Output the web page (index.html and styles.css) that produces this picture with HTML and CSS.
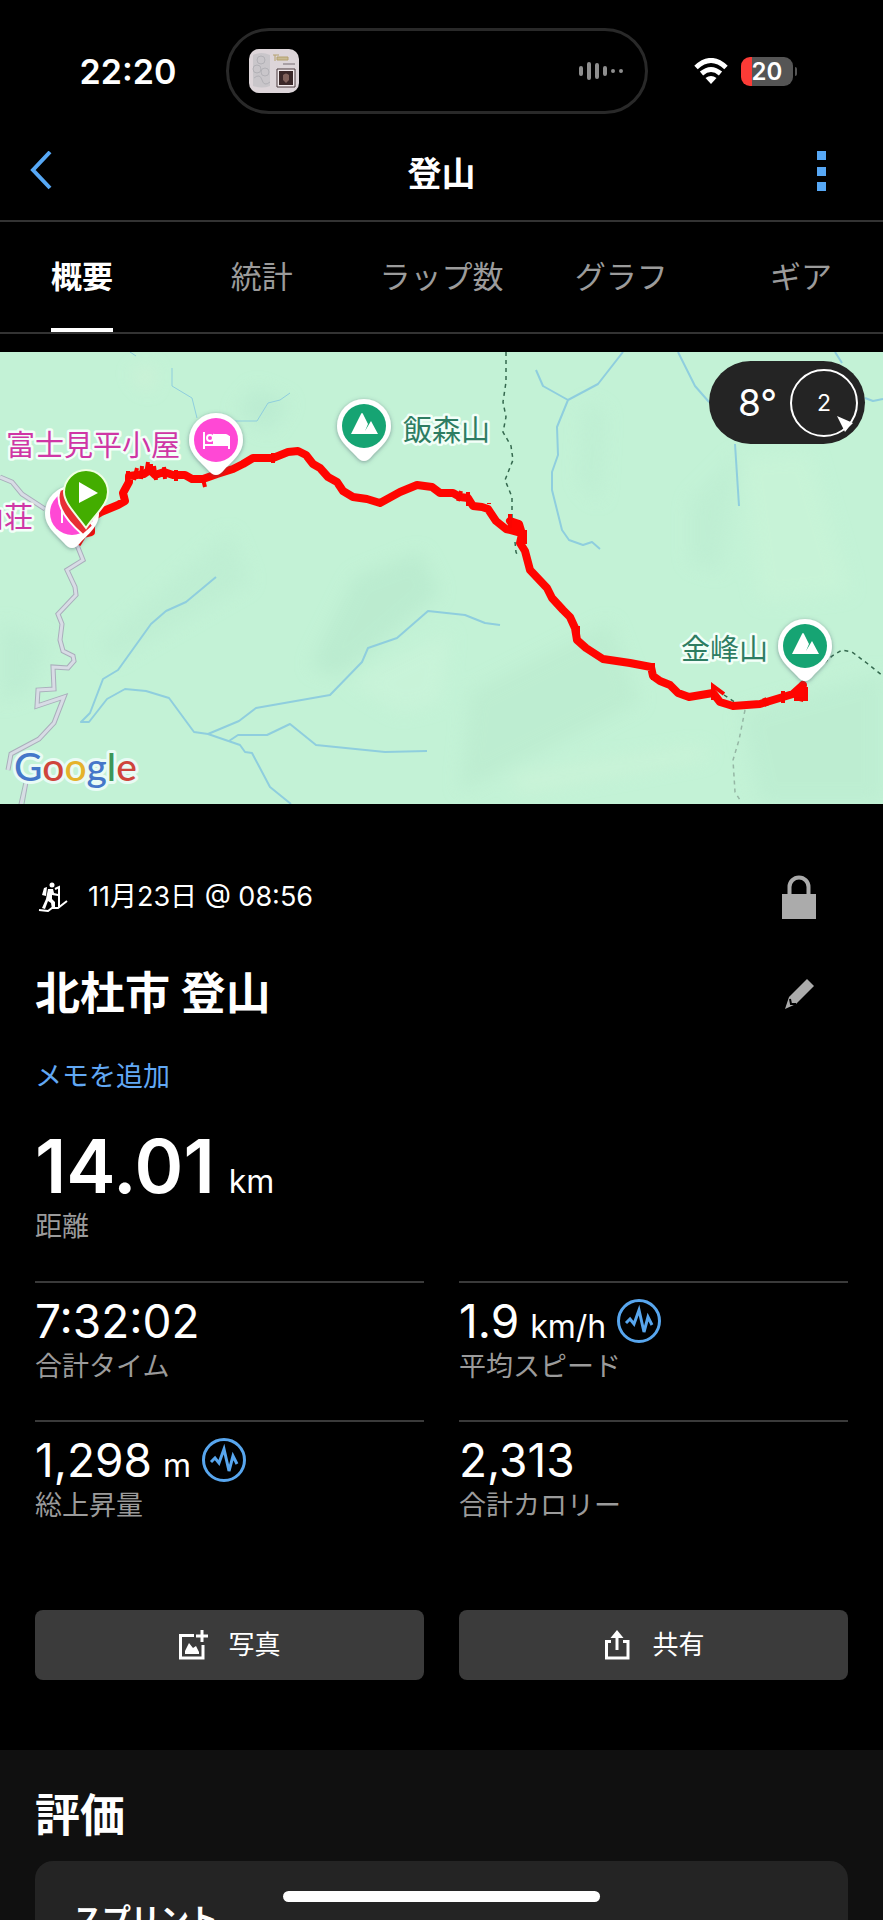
FILE: index.html
```html
<!DOCTYPE html>
<html lang="ja">
<head>
<meta charset="utf-8">
<meta name="viewport" content="width=device-width, initial-scale=1">
<title>登山</title>
<link rel="stylesheet" href="styles.css">
</head>
<body>
<div class="app">
  <div class="status">
    <time class="status-time">22:20</time>
    <div class="island">
      <svg class="artwork" viewBox="0 0 50 44" aria-hidden="true">
        <rect width="50" height="44" rx="10" fill="#ddd5d9"/>
        <path d="M4 6q8-4 17 0v31q-8 3-17 0z" fill="#c9c6ca"/>
        <g fill="none" stroke="#b2b1b6"><circle cx="12" cy="11" r="4"/><circle cx="8" cy="20" r="4"/><circle cx="16" cy="23" r="4"/><path d="M5 29q6-5 8 2t8 2"/></g>
        <path d="M24 6h6M26 6v6M28 8h11v3H28z" stroke="#b4a16e" fill="#c9bb93"/>
        <path d="M34 15h12" stroke="#a9a0a5" stroke-width="2"/>
        <path d="M28 20h18v18H28z" fill="#f1e9eb" stroke="#49383c"/>
        <path d="M30 22h14v14H30z" fill="#3a2728"/>
        <path d="M34 26q3-3 6 0v5l-3 3-3-3z" fill="#80615b"/>
      </svg>
      <svg class="wave" viewBox="0 0 46 18" aria-hidden="true">
        <g stroke="#8e8e8e" stroke-width="4" stroke-linecap="round"><path d="M3 6v6M11 2v14M19 3v12M27 6v6M35 9v0M43 9v0"/></g>
      </svg>
    </div>
    <div class="status-right">
      <svg class="wifi" viewBox="0 0 34 26" aria-hidden="true">
        <g fill="none" stroke="#fff" stroke-width="5"><path d="M2 9.500Q17-4.500 32 9.500"/><path d="M7.500 15.500q9.500-8 19 0"/></g>
        <path d="M11.500 20q5.500-4 11 0L17 26z" fill="#fff"/>
      </svg>
      <div class="battery"><span class="battery-level">20</span></div>
      <span class="battery-nub"></span>
    </div>
  </div>

  <header class="header">
    <button class="icon-button back" aria-label="戻る">
      <svg viewBox="0 0 22 40" width="22" height="40"><path d="M20 1 3 19l17 18" fill="none" stroke="#57a8f5" stroke-width="4"/></svg>
    </button>
    <h1 class="header-title">登山</h1>
    <button class="icon-button more" aria-label="メニュー">
      <svg viewBox="0 0 10 40" width="10" height="40"><path d="M0 0h9v9H0zM0 16h9v9H0zM0 31h9v9H0z" fill="#57a8f5"/></svg>
    </button>
  </header>

  <nav class="tabs">
    <div class="tab-list">
      <a class="tab tab-active" href="#overview">概要</a>
      <a class="tab" href="#stats">統計</a>
      <a class="tab" href="#laps">ラップ数</a>
      <a class="tab" href="#graph">グラフ</a>
      <a class="tab" href="#gear">ギア</a>
    </div>
  </nav>

  <section class="map">
    <svg class="map-canvas" viewBox="0 0 883 452" role="img" aria-label="ルート地図">
      <defs>
        <filter id="soft" x="-30%" y="-30%" width="160%" height="160%"><feGaussianBlur stdDeviation="9"/></filter>
        <filter id="shadow" x="-30%" y="-30%" width="160%" height="160%"><feDropShadow dx="0" dy="1" stdDeviation="2" flood-color="#456" flood-opacity=".55"/></filter>
        <path id="pin" d="M0 35Q-4 35-8 30C-15 22-27 14-27 0A27 27 0 0 1 27 0C27 14 15 22 8 30Q4 35 0 35z"/>
        <g id="peak">
          <use href="#pin" fill="#fff" filter="url(#shadow)"/>
          <circle r="22" fill="#16a473"/>
          <path d="M-13 8-3-12Q-2-14-1-12L4-2 1 5 7-5 14 8z" fill="#fff"/>
        </g>
      </defs>
      <rect width="883" height="452" fill="#c3f2d6"/>
      <g filter="url(#soft)" opacity=".7">
        <path d="M355 225 420 200 440 240 340 325 310 315z" fill="#b8e9cd"/>
        <path d="M255 35 290 50 270 80 235 60z" fill="#b9ead0"/>
        <path d="M470 340 610 270 640 350 460 440z" fill="#bbebcf"/>
        <path d="M740 360 883 320V452H760z" fill="#bbecd0"/>
        <path d="M690 150 740 100 720 220 690 210z" fill="#bdedd2"/>
        <path d="M585 50 605 60 600 150 580 130z" fill="#bdedd2"/>
        <path d="M100 290 230 180 250 230 110 310z" fill="#bdedd2"/>
        <path d="M0 270 50 290 30 340 0 350z" fill="#bbecd1"/>
        <path d="M510 425 700 395 710 405 520 440z" fill="#cff4d9"/>
        <path d="M350 330 450 280 440 350 400 360z" fill="#cbf4da"/>
        <path d="M740 105 810 100 850 240 760 250z" fill="#c9f4d8"/>
        <path d="M130 20 155 15 150 40z" fill="#d4f1d8"/>
      </g>
      <path d="M0 125 12 130 22 142 45 157 M77 193 83 208 67 218 75 235 76 243 58 262 62 272 60 288 63 299 73 304 74 309 68 316 53 315 54 337 38 338 37 354 64 345 54 371 39 387 11 402 8 418" fill="none" stroke="#a9aebb" stroke-width="5"/>
      <path d="M0 125 12 130 22 142 45 157 M77 193 83 208 67 218 75 235 76 243 58 262 62 272 60 288 63 299 73 304 74 309 68 316 53 315 54 337 38 338 37 354 64 345 54 371 39 387 11 402 8 418M27 430 21 452" fill="none" stroke="#d8dce5" stroke-width="3"/>
      <path d="M28 430 24 452M24 430 19 452" stroke="#a9aebb"/>
      <g fill="none" stroke="#8fcede" stroke-width="2" stroke-linejoin="round">
        <path stroke-width="1" d="M172 16v18l20 12 5 20M290 41 280 48 268 51 257 69H233M130 0l6 4"/>
        <path d="M623 0 598 32 568 48 543 34 536 18M568 48 557 75 558 103 552 120V138L562 178 569 188 583 193 592 190 600 197M678 0 695 34 709 50M735 92 739 154M835 0 842 11M865 46l8 3 10-2"/>
        <path d="M216 225 186 250 166 259 151 272 118 318 103 327 90 361 81 370H89L107 347 125 337 146 339 169 346 194 380 208 382 239 369 256 356 330 343 362 310 368 296 397 286 428 259 465 263 485 271 500 273M208 382 240 393 245 400 252 401 270 435 291 452M229 389 238 383H267L290 372 316 393 385 400 427 399"/>
      </g>
      <g fill="none" stroke="#34684e" stroke-width="1.500" stroke-dasharray="4 4">
        <path d="M506 0V30L503 50 506 65 503 80 511 94 513 108 505 128 512 145V166M515 190l1 10 2 5"/>
        <path d="M800 331 815 320 832 304 842 298 852 300 868 312 883 324M724 343l12 8"/>
        <path d="M745 358 739 388 733 408 735 440 740 448" stroke="#95b6a4"/>
      </g>
      <path d="M77 192 83 182 91 180 91 166 101 160 118 153 125 149 123 141 129 130 129 124 137 123 144 122 150 118 155 123 164 120 173 123 185 123 192 127 203 127 217 122 233 117 243 112 253 106 273 106 288 100 298 99 306 103 313 112 320 116 328 125 337 130 343 139 353 145 367 147 380 151 400 140 417 133 432 135 440 141 453 141 460 145 468 146 473 154 482 155 488 157 496 169 506 177 518 180 510 169 519 172 522 182 520 191 525 199 530 218 547 236 552 246 563 258 570 265 575 276 577 288 586 296 603 307 630 311 651 315 653 324 660 329 670 333 678 341 689 345 713 341 720 350 733 354 760 352 783 345 793 342 803 333 799 349" fill="none" stroke="#ff0500" stroke-width="8" stroke-linejoin="round"/>
      <path d="M128 127v-8M134 128l3-12M141 127l1-13M146 122l2-12M151 123v-11M156 128l-2-14M165 127l-1-12M176 129v-11M203 127l2 8M273 111v-10M458 149l3-10M468 154v-14M489 152v-1M510 176v-14M525 192v-14M578 286v-12M653 328v-17M713 348v-14l11 8M783 351v-12M767 354l-3-8M794 347h12v-12" fill="none" stroke="#fb0500" stroke-width="4"/>
      <g transform="translate(216 88)">
        <use href="#pin" fill="#fff" filter="url(#shadow)"/><circle r="22" fill="#ff48d5"/>
        <path d="M-12-8V9M-12 5H13M13 9V-3L-2-5V4" fill="none" stroke="#fff" stroke-width="2"/><path d="M-1-6 10-6Q14-5 14-1V4H-1z" fill="#fff"/><circle cx="-6" cy="-2" r="3" fill="none" stroke="#fff" stroke-width="2"/>
      </g>
      <g transform="translate(72 161)"><use href="#pin" fill="#fff" filter="url(#shadow)"/><circle r="22" fill="#ff48d5"/><path d="M-10-8v18" stroke="#fff" stroke-width="2"/></g>
      <path d="M60 138C54 153 68 170 83 183L93 174 67 135z" fill="#e82e34" stroke="#fff" stroke-width="2"/>
      <path d="M86 176C76 162 64 151 64 140A22 22 0 0 1 108 140C108 153 96 161 86 176z" fill="#43ad00" stroke="#efffe3" stroke-width="2"/>
      <path d="M79 130v21l19-10z" fill="#fff"/>
      <use href="#peak" transform="translate(364 74)"/>
      <use href="#peak" transform="translate(805 294)"/>
      <g class="map-label">
        <text class="lodging" x="6" y="104">富士見平小屋</text>
        <text class="lodging" x="33" y="176" text-anchor="end">山荘</text>
        <text class="summit" x="403" y="89">飯森山</text>
        <text class="summit" x="681" y="308">金峰山</text>
      </g>
      <text class="google" x="14" y="429"><tspan fill="#4577c9">G</tspan><tspan fill="#cf453c">o</tspan><tspan fill="#e5b22b">o</tspan><tspan fill="#4577c9">g</tspan><tspan fill="#3d9657">l</tspan><tspan fill="#cf453c">e</tspan></text>
    </svg>
    <div class="weather">
      <span class="temperature">8°</span>
      <div class="wind">
        <span>2</span>
        <svg class="wind-arrow" viewBox="0 0 16 16" aria-hidden="true"><path d="M0 0 16 7 12 11 8 16z" fill="#fff"/></svg>
      </div>
    </div>
  </section>

  <main class="details" id="overview">
    <div class="row meta-row">
      <div class="activity-date">
        <svg viewBox="0 0 30 30" width="30" height="30" aria-hidden="true">
          <circle cx="14" cy="3" r="2.500" fill="#fff"/>
          <path d="M6 6 9 5 8 14 4 13z" fill="#fff"/>
          <path d="M10 7 15 7 16 11 20 12 20 14 14 13 14 17 17 20 17 26 14 27 13 21 10 19 7 27 4 26 8 17z" fill="#fff"/>
          <path d="M17 7 21 5V26M1 28 10 29 14 26 20 26 29 19" fill="none" stroke="#fff" stroke-width="2"/>
        </svg>
        <time>11月23日 @ 08:56</time>
      </div>
      <button class="icon-button" aria-label="公開範囲">
        <svg viewBox="0 0 34 44" width="34" height="44"><path d="M7.500 20V12a9.500 9.500 0 0 1 19 0v8" fill="none" stroke="#ababab" stroke-width="4"/><path d="M0 19h34v25H0z" fill="#ababab"/></svg>
      </button>
    </div>
    <div class="row title-row">
      <h2 class="title">北杜市 登山</h2>
      <button class="icon-button" aria-label="編集">
        <svg viewBox="0 0 34 34" width="34" height="34"><path d="M25 2 32 9 14 27 3 32 7 20z" fill="#ababab"/><path d="m8 22 1 5 5 0" fill="none" stroke="#000" stroke-width="2"/></svg>
      </button>
    </div>
    <a class="memo" href="#memo">メモを追加</a>
    <div class="distance"><span class="distance-number">14.01</span> <span class="unit">km</span></div>
    <div class="label">距離</div>

    <div class="stats">
      <div class="stat">
        <div class="value">7:32:02</div>
        <div class="label">合計タイム</div>
      </div>
      <div class="stat">
        <div class="value">1.9 <span class="unit">km/h</span>
          <button class="icon-button chart" aria-label="平均スピードのグラフ"><svg viewBox="0 0 44 44" width="44" height="44"><circle cx="22" cy="22" r="20.500" fill="none" stroke="#58a6ee" stroke-width="3"/><path d="M9 24 13 20 17 25 22 11 27 33 31 18 35 26" fill="none" stroke="#58a6ee" stroke-width="3"/></svg></button>
        </div>
        <div class="label">平均スピード</div>
      </div>
      <div class="stat">
        <div class="value">1,298 <span class="unit">m</span>
          <button class="icon-button chart" aria-label="総上昇量のグラフ"><svg viewBox="0 0 44 44" width="44" height="44"><circle cx="22" cy="22" r="20.500" fill="none" stroke="#58a6ee" stroke-width="3"/><path d="M9 24 13 20 17 25 22 11 27 33 31 18 35 26" fill="none" stroke="#58a6ee" stroke-width="3"/></svg></button>
        </div>
        <div class="label">総上昇量</div>
      </div>
      <div class="stat">
        <div class="value">2,313</div>
        <div class="label">合計カロリー</div>
      </div>
    </div>

    <div class="actions">
      <button class="action">
        <svg viewBox="0 0 30 30" width="30" height="30" aria-hidden="true"><path d="M16 5.500H2.500V28H25V15" fill="none" stroke="#fff" stroke-width="3"/><path d="M24 0v12M18 6h12" stroke="#fff" stroke-width="3"/><path d="M7 24V21L11 13 15 18 18 16 21 22V24z" fill="#fff"/></svg>
        写真
      </button>
      <button class="action">
        <svg viewBox="0 0 30 30" width="30" height="30" aria-hidden="true"><path d="M9 11.500H4.500V28H26V11.500H21" fill="none" stroke="#fff" stroke-width="3"/><path d="M15 20V5" stroke="#fff" stroke-width="3"/><path d="M8.500 8 15 0 21.500 8z" fill="#fff"/></svg>
        共有
      </button>
    </div>
  </main>

  <section class="rating">
    <h2 class="title">評価</h2>
    <div class="card">スプリント</div>
  </section>
  <div class="home-indicator"></div>
</div>
</body>
</html>
```

FILE: styles.css
```css
* { box-sizing: border-box; }

body {
  margin: 0;
  background: #000;
  color: #fff;
  font-family: Inter, "Noto Sans CJK JP", sans-serif;
}

h1, h2 { margin: 0; }

svg { display: block; }

.app {
  position: relative;
  height: 100vh;
  overflow: hidden;
}

.icon-button {
  display: flex;
  padding: 0;
  border: 0;
  background: none;
}

/* Status bar */
.status {
  display: grid;
  grid-template-columns: 1fr 422px 1fr;
  align-items: center;
  padding: 28px 9px 8px 0;
}

.status-time {
  padding-left: 30px;
  text-align: center;
  font-size: 34px;
  font-weight: 600;
}

.island {
  display: flex;
  align-items: center;
  justify-content: space-between;
  height: 86px;
  padding: 0 21px 0 20px;
  border: 3px solid #292929;
  border-radius: 43px;
}

.artwork { width: 50px; height: 44px; }
.wave { width: 46px; height: 18px; }

.status-right {
  display: flex;
  align-items: center;
  padding-left: 46px;
}

.wifi { width: 34px; height: 26px; }

.battery {
  width: 52px;
  height: 29px;
  margin-left: 13px;
  border-radius: 9px;
  background: linear-gradient(90deg, #fb3b36 11px, #555 11px);
  text-align: center;
  font-size: 24px;
  font-weight: 600;
  line-height: 29px;
}

.battery-nub {
  width: 2px;
  height: 9px;
  margin-left: 2px;
  border-radius: 0 2px 2px 0;
  background: #555;
}

/* Header */
.header {
  display: grid;
  grid-template-columns: 1fr auto 1fr;
  align-items: center;
  height: 100px;
  padding: 0 56px 0 30px;
  border-bottom: 2px solid #333;
}

.header-title {
  padding-left: 26px;
  font-size: 34px;
  font-weight: 600;
}

.more { justify-self: end; }

/* Tabs */
.tabs {
  overflow: hidden;
  border-bottom: 2px solid #333;
}

.tab-list {
  display: grid;
  grid-template-columns: repeat(5, 1fr);
  justify-items: center;
  margin: 0 -8px;
}

.tab {
  height: 110px;
  border-bottom: 4px solid transparent;
  color: #9b9b9b;
  font-size: 31px;
  line-height: 110px;
  text-decoration: none;
}

.tab-active {
  border-color: #fff;
  color: #fff;
  font-weight: 700;
}

/* Map */
.map {
  position: relative;
  margin-top: 18px;
}

.map-canvas { width: 100%; height: auto; }

.map-label {
  font-size: 29px;
  stroke: #f2fff8;
  stroke-width: 5px;
  stroke-linejoin: round;
  paint-order: stroke;
}

.lodging { fill: #cf36a5; }
.summit { fill: #2e7d62; }

.google {
  font-family: Lato, sans-serif;
  font-size: 39px;
  font-weight: 500;
  stroke: #e9fbf5;
  stroke-width: 6px;
  stroke-linejoin: round;
  paint-order: stroke;
}

.weather {
  position: absolute;
  top: 9px;
  right: 18px;
  display: flex;
  align-items: center;
  justify-content: space-between;
  width: 156px;
  height: 83px;
  padding: 0 7px 0 29px;
  border-radius: 42px;
  background: #242424;
}

.temperature { font-size: 37px; }

.wind {
  position: relative;
  display: flex;
  align-items: center;
  justify-content: center;
  width: 68px;
  height: 68px;
  border: 2px solid #fff;
  border-radius: 50%;
  font-size: 23px;
}

.wind-arrow {
  position: absolute;
  right: 3px;
  bottom: 3px;
  width: 16px;
  height: 16px;
}

/* Details */
.details { padding: 62px 35px 70px; }

.row {
  display: flex;
  align-items: center;
  justify-content: space-between;
  padding-right: 32px;
}

.meta-row { height: 62px; }

.title-row {
  height: 64px;
  margin-top: 34px;
}

.activity-date {
  display: flex;
  align-items: center;
  gap: 20px;
  padding-left: 3px;
  font-size: 27px;
  line-height: 32px;
}

.title {
  font-size: 45px;
  font-weight: 700;
  line-height: 54px;
}

.memo {
  display: block;
  width: fit-content;
  margin-top: 35px;
  color: #62a8f4;
  font-size: 27px;
  line-height: 32px;
  text-decoration: none;
}

.distance {
  display: flex;
  align-items: baseline;
  gap: 14px;
  height: 72px;
  margin: 37px 0 9px;
  line-height: 72px;
}

.distance-number {
  font-size: 74px;
  font-weight: 600;
}

.unit { font-size: 32px; }

.label {
  color: #9b9b9b;
  font-size: 27px;
  line-height: 32px;
}

.stats {
  display: grid;
  grid-template-columns: 1fr 1fr;
  column-gap: 35px;
  margin-top: 38px;
}

.stat {
  padding: 12px 0 37px;
  border-top: 2px solid #3a3a3a;
}

.value {
  display: flex;
  align-items: baseline;
  gap: 11px;
  height: 52px;
  margin-bottom: 4px;
  font-size: 46px;
  line-height: 52px;
}

.chart { align-self: center; }

.actions {
  display: grid;
  grid-template-columns: 1fr 1fr;
  gap: 35px;
  margin-top: 51px;
}

.action {
  display: flex;
  align-items: center;
  justify-content: center;
  gap: 20px;
  height: 70px;
  padding: 0;
  border: 0;
  border-radius: 8px;
  background: #3b3b3b;
  color: #fff;
  font: inherit;
  font-size: 26px;
  line-height: 32px;
}

/* Rating */
.rating {
  padding: 39px 35px 0;
  background: #101010;
}

.card {
  margin-top: 18px;
  padding: 39px 38px;
  border-radius: 18px;
  background: #242424;
  font-size: 29px;
  font-weight: 600;
  line-height: 40px;
}

.home-indicator {
  position: absolute;
  bottom: 18px;
  left: 50%;
  width: 36%;
  height: 11px;
  border-radius: 6px;
  background: #fff;
  transform: translateX(-50%);
}
```
